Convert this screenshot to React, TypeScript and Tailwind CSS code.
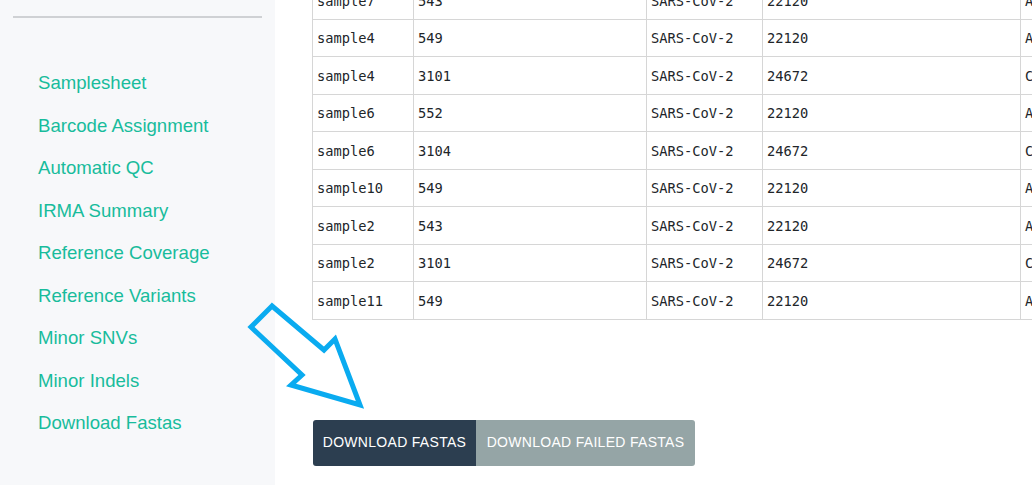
import React from "react";

const navItems = [
  "Samplesheet",
  "Barcode Assignment",
  "Automatic QC",
  "IRMA Summary",
  "Reference Coverage",
  "Reference Variants",
  "Minor SNVs",
  "Minor Indels",
  "Download Fastas",
];

const rows: [string, string, string, string, string][] = [
  ["sample7", "543", "SARS-CoV-2", "22120", "A"],
  ["sample4", "549", "SARS-CoV-2", "22120", "A"],
  ["sample4", "3101", "SARS-CoV-2", "24672", "C"],
  ["sample6", "552", "SARS-CoV-2", "22120", "A"],
  ["sample6", "3104", "SARS-CoV-2", "24672", "C"],
  ["sample10", "549", "SARS-CoV-2", "22120", "A"],
  ["sample2", "543", "SARS-CoV-2", "22120", "A"],
  ["sample2", "3101", "SARS-CoV-2", "24672", "C"],
  ["sample11", "549", "SARS-CoV-2", "22120", "A"],
];

export default function App() {
  return (
    <div className="relative flex h-[485px] w-[1032px] overflow-hidden bg-white font-['Liberation_Sans',Arial,sans-serif]">
      <aside className="flex w-[275px] shrink-0 flex-col bg-[#f7f8fa]">
        <div className="mx-[13px] mt-[16px] h-[2px] bg-[#cfd1d4]" />
        <nav className="mt-[52px] flex flex-col pl-[38px]">
          {navItems.map((item) => (
            <a key={item} className="h-[42.5px] text-[18.6px] leading-[25px] text-[#18bc9c]">
              {item}
            </a>
          ))}
        </nav>
      </aside>

      <main className="flex min-w-0 flex-1 flex-col overflow-hidden pl-[37px]">
        <div className="mt-[-19px] overflow-hidden">
          <table className="w-[830px] table-fixed border-collapse font-['DejaVu_Sans_Mono',monospace] text-[13.7px] text-[#212529]">
            <colgroup>
              <col className="w-[101px]" />
              <col className="w-[233px]" />
              <col className="w-[116px]" />
              <col className="w-[258px]" />
              <col className="w-[122px]" />
            </colgroup>
            <tbody>
              {rows.map((r, i) => (
                <tr key={i} className="h-[37.5px]">
                  {r.map((c, j) => (
                    <td
                      key={j}
                      className="border border-[#d6d6d6] px-[4px] pt-[3px] align-middle leading-none"
                    >
                      {c}
                    </td>
                  ))}
                </tr>
              ))}
            </tbody>
          </table>
        </div>

        <div className="mt-[100px] flex pl-[1px]">
          <button className="h-[46px] w-[163px] rounded-l-[3px] bg-[#2c3e50] text-[14px] tracking-[0.3px] text-white">
            DOWNLOAD FASTAS
          </button>
          <button className="h-[46px] w-[219px] rounded-r-[3px] bg-[#95a5a6] text-[14px] tracking-[0.3px] text-white">
            DOWNLOAD FAILED FASTAS
          </button>
        </div>
      </main>

      <svg
        className="absolute left-[240px] top-[295px]"
        width="135"
        height="120"
        viewBox="240 295 135 120"
      >
        <polygon
          points="272,306 251,327 302,375 291,385 360,405 335,339 324,350"
          fill="none"
          stroke="#0aabf0"
          strokeWidth="5"
          strokeLinejoin="miter"
        />
      </svg>
    </div>
  );
}
